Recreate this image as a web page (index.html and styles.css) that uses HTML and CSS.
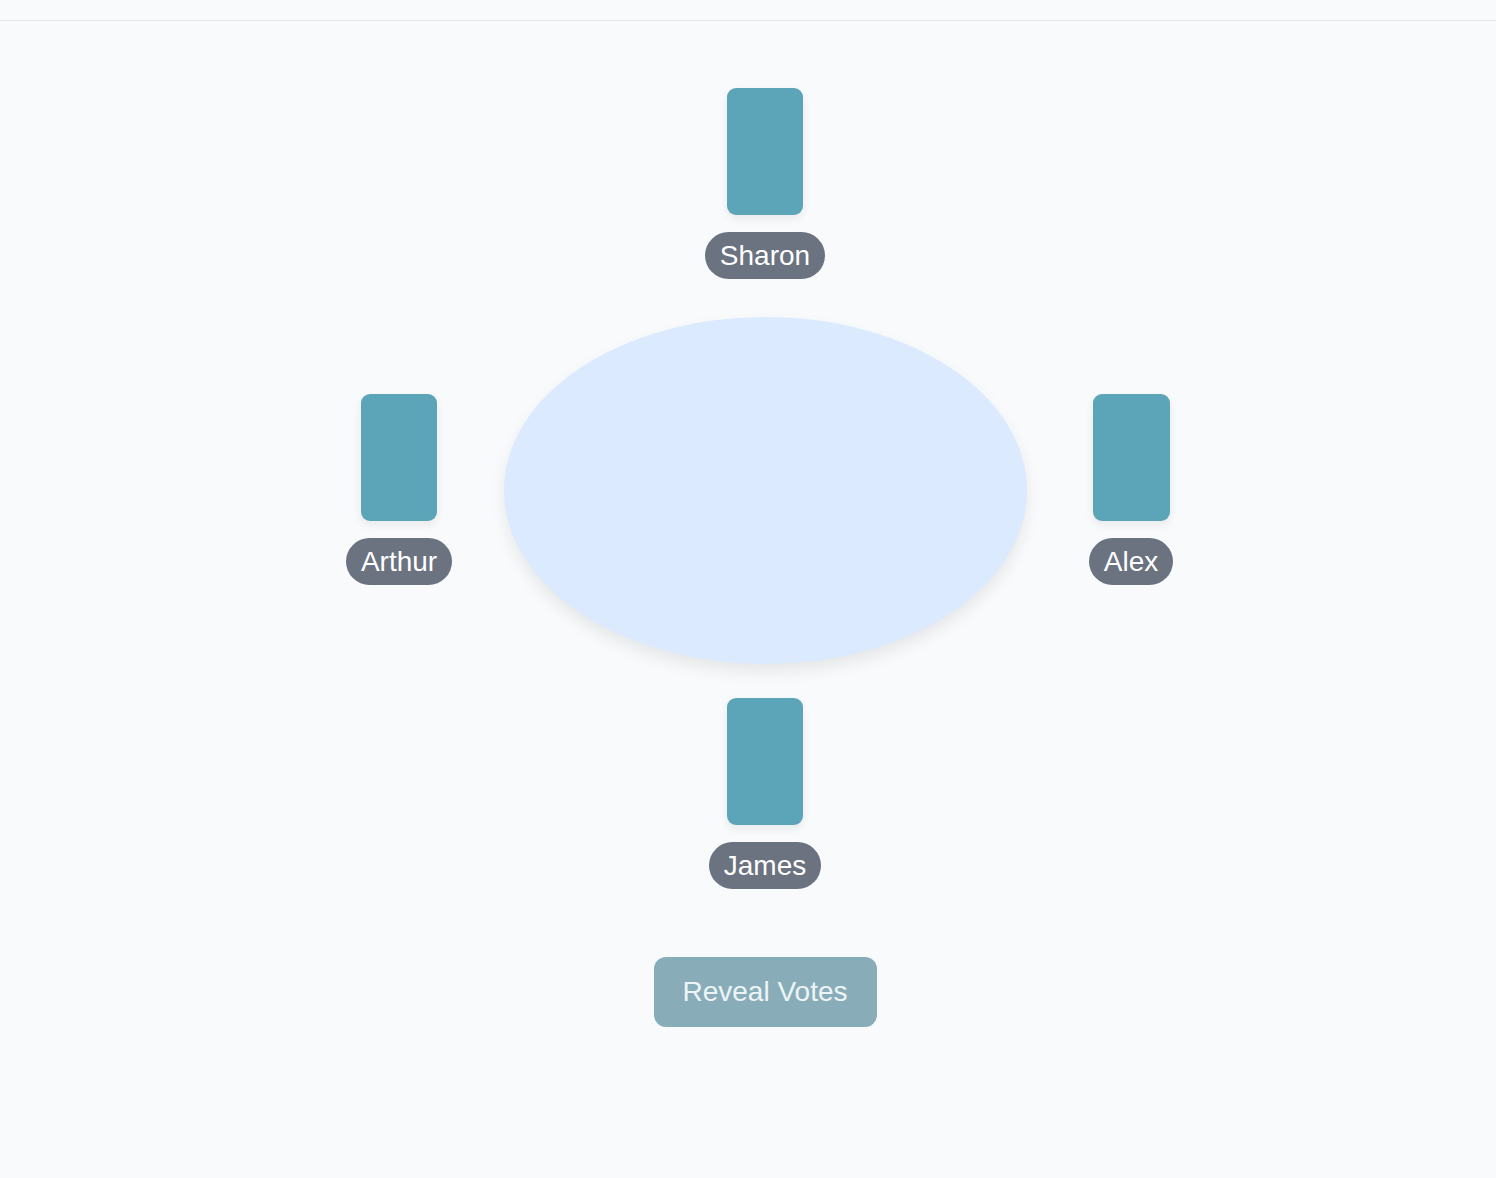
FILE: index.html
```html
<!DOCTYPE html>
<html lang="en">
<head>
<meta charset="utf-8">
<title>Planning Poker</title>
<link rel="stylesheet" href="styles.css">
</head>
<body>
<header class="topbar"></header>
<main class="room">
  <div class="table-grid">
    <div class="seat seat-top">
      <div class="card"></div>
      <div class="name">Sharon</div>
    </div>
    <div class="seat seat-left">
      <div class="card"></div>
      <div class="name">Arthur</div>
    </div>
    <div class="table"></div>
    <div class="seat seat-right">
      <div class="card"></div>
      <div class="name">Alex</div>
    </div>
    <div class="seat seat-bottom">
      <div class="card"></div>
      <div class="name">James</div>
    </div>
  </div>
  <button class="reveal">Reveal Votes</button>
</main>
</body>
</html>
```
FILE: styles.css
```css
html, body {
  margin: 0;
  padding: 0;
  background: #f8fafc;
  font-family: "Liberation Sans", Arial, sans-serif;
}
.topbar {
  height: 20px;
  border-bottom: 1px solid #e5e7eb;
  background: #f8fafc;
}
.room {
  display: flex;
  flex-direction: column;
  align-items: center;
  padding-top: 67px;
  padding-left: 34px;
}
.table-grid {
  display: grid;
  grid-template-columns: 209px 523px 209px;
  grid-template-rows: 229px 347px 225px;
  grid-template-areas:
    ". top ."
    "left table right"
    ". bottom .";
}
.seat {
  display: flex;
  flex-direction: column;
  align-items: center;
  justify-content: center;
  gap: 17px;
}
.seat-top { grid-area: top; justify-content: flex-start; }
.seat-left { grid-area: left; margin-bottom: 2px; }
.seat-right { grid-area: right; margin-bottom: 2px; }
.seat-bottom { grid-area: bottom; justify-content: flex-end; }
.card {
  width: 76px;
  height: 127px;
  background: #5ca5b8;
  border-radius: 9px;
  box-shadow: 0 4px 10px rgba(0, 0, 0, 0.07);
}
.seat-right .card { width: 77px; }
.name {
  height: 47px;
  box-sizing: border-box;
  padding: 0 15px;
  border-radius: 24px;
  background: #6b7280;
  color: #ffffff;
  font-size: 28px;
  line-height: 47px;
}
.table {
  grid-area: table;
  width: 523px;
  height: 347px;
  border-radius: 50%;
  background: #dbeafe;
  box-shadow: 0 8px 16px rgba(0, 0, 0, 0.08);
}
.reveal {
  margin-top: 68px;
  width: 223px;
  height: 70px;
  border: none;
  border-radius: 12px;
  background: #88adb9;
  color: #eef4f6;
  font-family: "Liberation Sans", Arial, sans-serif;
  font-size: 28px;
  padding: 0;
}
```
